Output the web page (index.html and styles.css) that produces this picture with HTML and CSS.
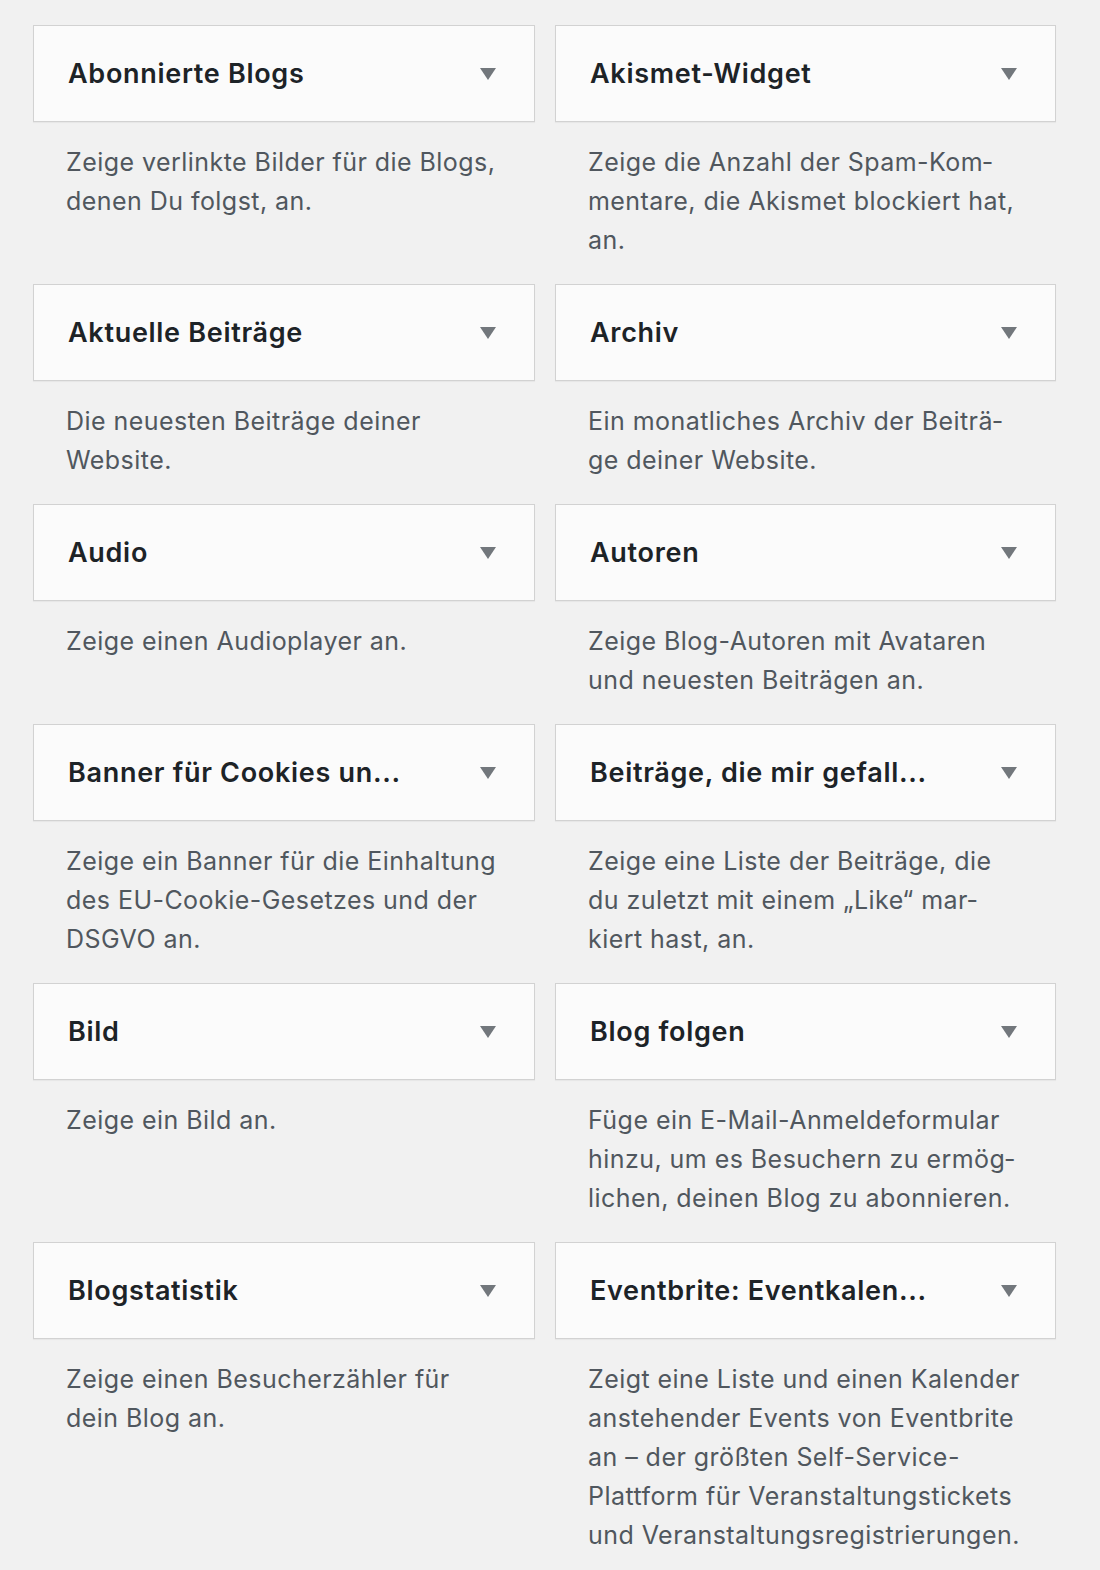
FILE: index.html
```html
<!DOCTYPE html>
<html lang="de">

<head>
    <meta charset="UTF-8">
    <title>Widgets</title>

    <link rel="stylesheet" href="styles.css">

</head>

<body>

    <section class="widgets">

        <article class="widget">
            <div class="kopf">
                <h3>Abonnierte Blogs</h3>
                <span class="pfeil"></span>
            </div>
            <p class="beschreibung">Zeige verlinkte Bilder für die Blogs, denen Du folgst, an.</p>
        </article>

        <article class="widget">
            <div class="kopf">
                <h3>Akismet-Widget</h3>
                <span class="pfeil"></span>
            </div>
            <p class="beschreibung">Zeige die Anzahl der Spam-Kom&shy;mentare, die Akismet blockiert hat, an.</p>
        </article>

        <article class="widget">
            <div class="kopf">
                <h3>Aktuelle Beiträge</h3>
                <span class="pfeil"></span>
            </div>
            <p class="beschreibung">Die neuesten Beiträge deiner Website.</p>
        </article>

        <article class="widget">
            <div class="kopf">
                <h3>Archiv</h3>
                <span class="pfeil"></span>
            </div>
            <p class="beschreibung">Ein monatliches Archiv der Beiträ&shy;ge deiner Website.</p>
        </article>

        <article class="widget">
            <div class="kopf">
                <h3>Audio</h3>
                <span class="pfeil"></span>
            </div>
            <p class="beschreibung">Zeige einen Audioplayer an.</p>
        </article>

        <article class="widget">
            <div class="kopf">
                <h3>Autoren</h3>
                <span class="pfeil"></span>
            </div>
            <p class="beschreibung">Zeige Blog-Autoren mit Avataren und neuesten Beiträgen an.</p>
        </article>

        <article class="widget">
            <div class="kopf">
                <h3>Banner für Cookies un...</h3>
                <span class="pfeil"></span>
            </div>
            <p class="beschreibung">Zeige ein Banner für die Einhaltung des EU-Cookie-Gesetzes und der DSGVO an.</p>
        </article>

        <article class="widget">
            <div class="kopf">
                <h3>Beiträge, die mir gefall...</h3>
                <span class="pfeil"></span>
            </div>
            <p class="beschreibung">Zeige eine Liste der Beiträge, die du zuletzt mit einem „Like“ mar&shy;kiert hast, an.</p>
        </article>

        <article class="widget">
            <div class="kopf">
                <h3>Bild</h3>
                <span class="pfeil"></span>
            </div>
            <p class="beschreibung">Zeige ein Bild an.</p>
        </article>

        <article class="widget">
            <div class="kopf">
                <h3>Blog folgen</h3>
                <span class="pfeil"></span>
            </div>
            <p class="beschreibung">Füge ein E-Mail-Anmeldeformular hinzu, um es Besuchern zu ermög&shy;lichen, deinen Blog zu abonnieren.</p>
        </article>

        <article class="widget">
            <div class="kopf">
                <h3>Blogstatistik</h3>
                <span class="pfeil"></span>
            </div>
            <p class="beschreibung">Zeige einen Besucherzähler für dein Blog an.</p>
        </article>

        <article class="widget">
            <div class="kopf">
                <h3>Eventbrite: Eventkalen...</h3>
                <span class="pfeil"></span>
            </div>
            <p class="beschreibung">Zeigt eine Liste und einen Kalender anstehender Events von Eventbrite an – der größten Self-Service-Plattform für Veranstaltungstickets und Veranstaltungsregistrierungen.</p>
        </article>

    </section>

</body>

</html>
```

FILE: styles.css
```css
body {
    margin: 0;
    background-color: #f1f1f1;
    font-family: Inter, "Noto Sans", sans-serif;
}

.widgets {
    display: grid;
    grid-template-columns: 502px 501px;
    column-gap: 20px;
    padding: 25px 0 0 33px;
}

.widget {
    margin-bottom: 24px;
}

.kopf {
    display: flex;
    align-items: center;
    justify-content: space-between;
    height: 95px;
    padding: 0 38px 0 34px;
    background-color: #fbfbfb;
    border: 1px solid #d2d2d2;
    box-shadow: 0 1px 1px rgba(0, 0, 0, 0.04);
}

.kopf h3 {
    margin: 0;
    font-size: 27px;
    font-weight: 600;
    letter-spacing: 0.7px;
    color: #1d2327;
}

.pfeil {
    width: 0;
    height: 0;
    border-left: 8px solid transparent;
    border-right: 8px solid transparent;
    border-top: 12px solid #72777c;
}

.beschreibung {
    margin: 21px 36px 0 33px;
    font-size: 25px;
    letter-spacing: 0.45px;
    line-height: 39px;
    color: #50575e;
}
```
